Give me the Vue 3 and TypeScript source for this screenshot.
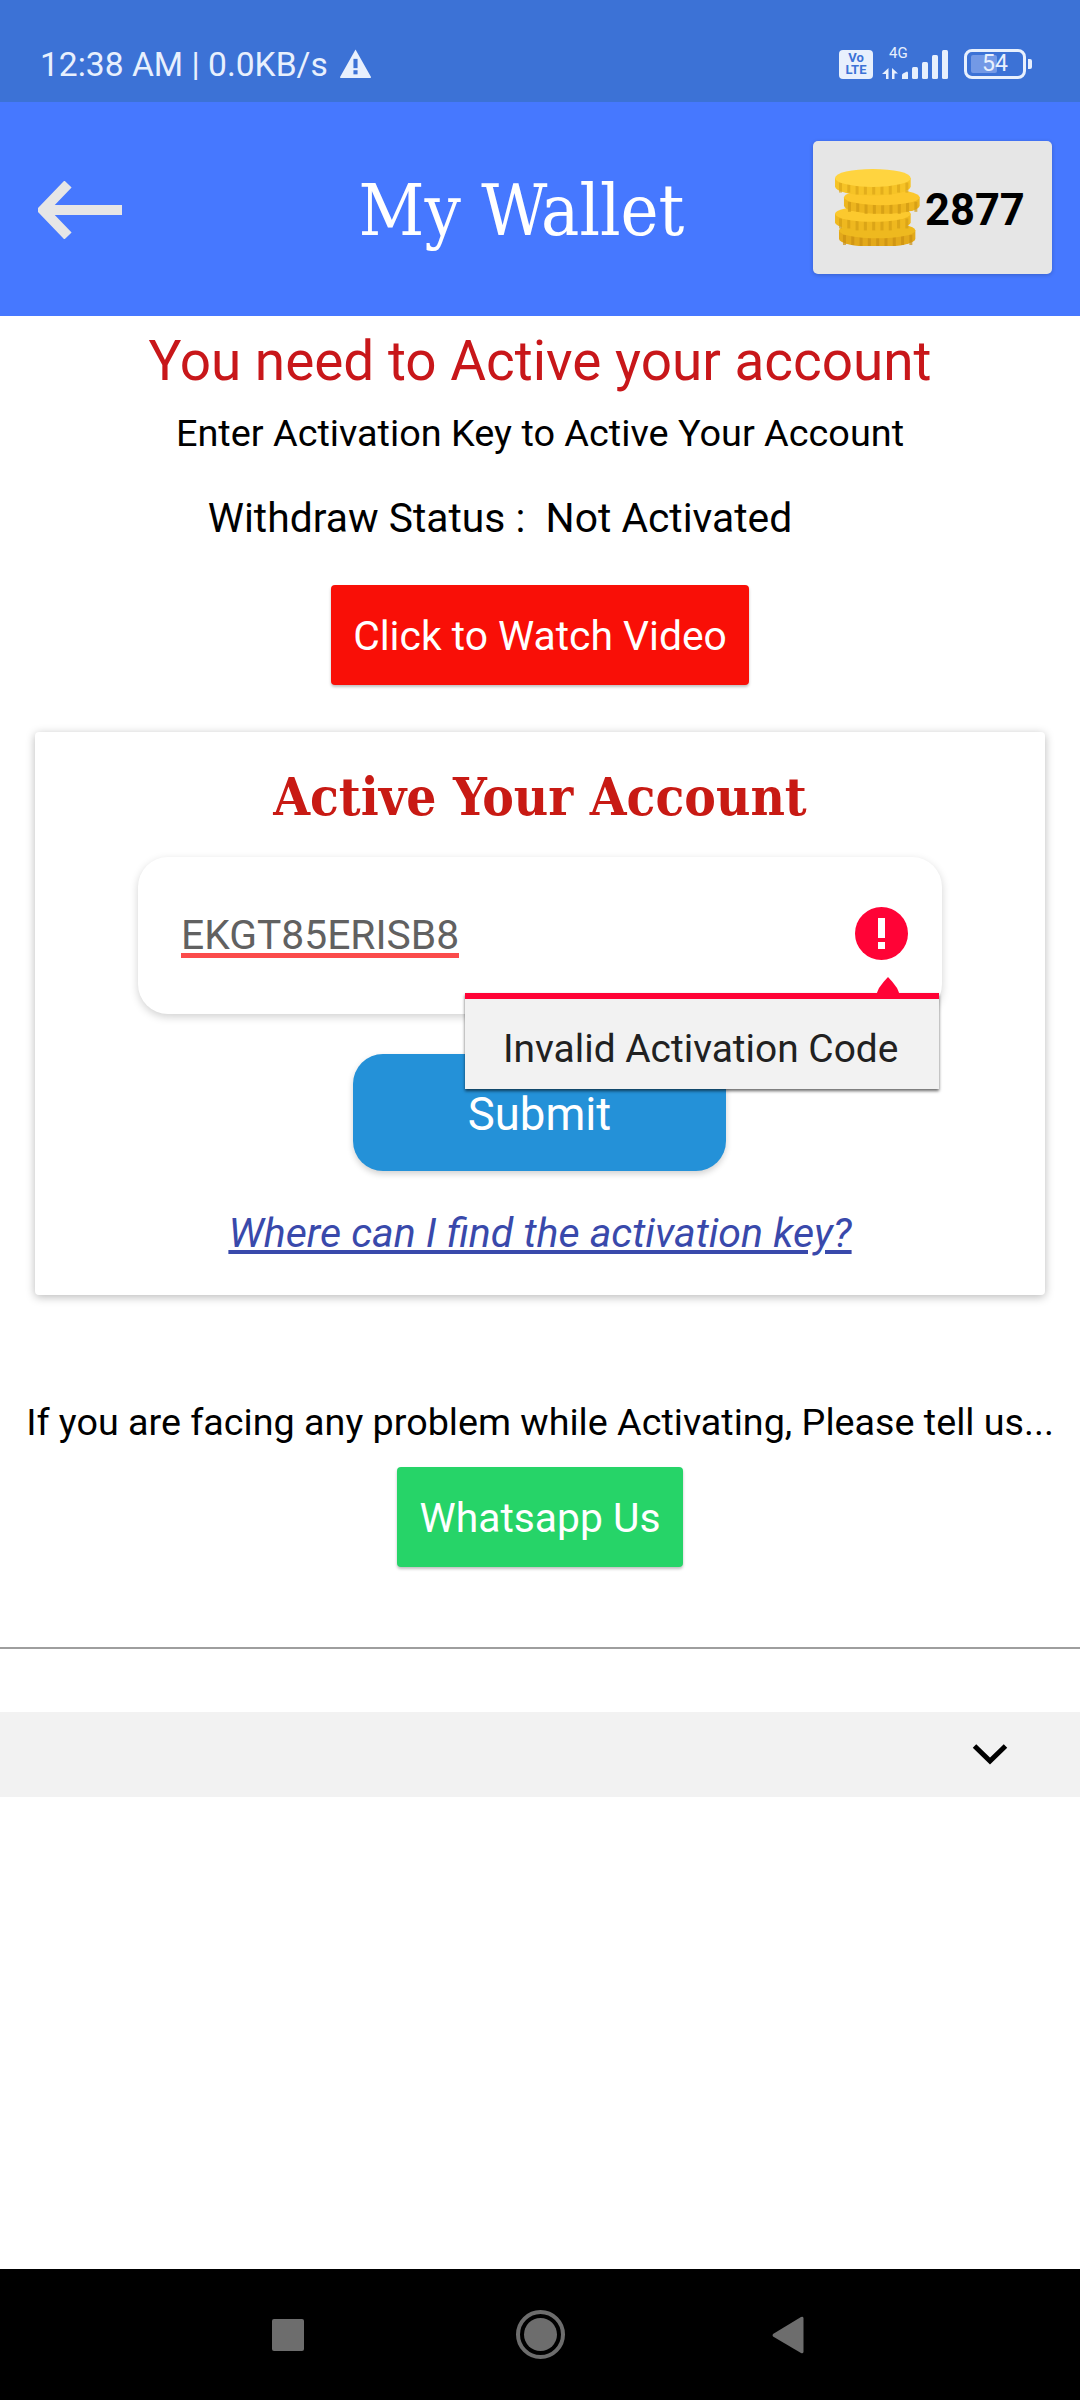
<script setup lang="ts">
const ribs: number[] = Array.from({ length: 9 }, (_, i) => i)
const coins = [
  { cx: 292, top: 635, rx: 115, ry: 24, h: 26, face: '#eeb91f', side: '#e3a91a', rib: '#c98f12' },
  { cx: 279, top: 585, rx: 114, ry: 24, h: 26, face: '#fcc92e', side: '#efb81f', rib: '#d39c14' },
  { cx: 306, top: 535, rx: 114, ry: 24, h: 26, face: '#fcc72c', side: '#edb51e', rib: '#cf9813' },
  { cx: 279, top: 477, rx: 114, ry: 27, h: 26, face: '#ffd43f', side: '#f6c326', rib: '#dba518' },
]
</script>

<template>
  <div class="screen">
    <div class="status">
      <div class="status-left">
        <span>12:38 AM | 0.0KB/s</span>
        <svg class="warn" viewBox="0 0 32 29" width="33" height="31">
          <path d="M16 1 L31 27.5 Q31.5 28.5 30 28.5 H2 Q.5 28.5 1 27.5 Z" fill="#e8f0fd" />
          <rect x="14" y="10" width="4" height="9" fill="#3c72d6" />
          <rect x="14" y="21" width="4" height="4" fill="#3c72d6" />
        </svg>
      </div>
      <div class="status-right">
        <div class="volte"><span>Vo</span><span>LTE</span></div>
        <div class="signal">
          <span class="four-g">4G</span>
          <svg viewBox="0 0 67 32" width="67" height="32">
            <path d="M6.5 21 L0 27 H4 V32 H6.5 Z M10 21 L16 26.5 H12.5 V32 H10 Z" fill="#e8f0fd" />
            <path d="M20 32 V28 Q20 27 21 26.5 L25 24.5 Q26 24.5 26 26 V32 Z" fill="#e8f0fd" />
            <rect x="30" y="20" width="6" height="12" rx="1.5" fill="#e8f0fd" />
            <rect x="40" y="15" width="6" height="17" rx="1.5" fill="#e8f0fd" />
            <rect x="50" y="8" width="6" height="24" rx="1.5" fill="#e8f0fd" />
            <rect x="60" y="3" width="6" height="29" rx="1.5" fill="#e8f0fd" />
          </svg>
        </div>
        <div class="battery">
          <div class="battery-body">
            <div class="battery-fill"></div>
            <span class="battery-num">54</span>
          </div>
          <div class="battery-cap"></div>
        </div>
      </div>
    </div>

    <header class="topbar">
      <svg class="back" viewBox="0 0 84 58" width="84" height="58">
        <path d="M30 3 L5 29 L30 55 M6 29 H84" fill="none" stroke="#e6e6e6" stroke-width="10" />
      </svg>
      <h1 class="title">My Wallet</h1>
      <div class="wallet">
        <svg class="coins" viewBox="165 450 256 232" width="85" height="77">
          <g v-for="(c, i) in coins" :key="i">
            <path
              :d="`M${c.cx - c.rx} ${c.top} v${c.h} a${c.rx} ${c.ry} 0 0 0 ${c.rx * 2} 0 v-${c.h} Z`"
              :fill="c.side"
            />
            <rect
              v-for="r in ribs"
              :key="r"
              :x="c.cx - c.rx + 12 + r * 25"
              :y="c.top + 14"
              width="9"
              :height="c.h + (r > 1 && r < 7 ? 10 : 4)"
              :fill="c.rib"
              opacity="0.7"
            />
            <ellipse :cx="c.cx" :cy="c.top" :rx="c.rx" :ry="c.ry" :fill="c.face" />
          </g>
        </svg>
        <span class="balance">2877</span>
      </div>
    </header>

    <main class="content">
      <h2 class="need">You need to Active your account</h2>
      <p class="enter">Enter Activation Key to Active Your Account</p>
      <p class="withdraw">Withdraw Status :&nbsp; Not Activated</p>
      <button class="btn red-btn">Click to Watch Video</button>

      <section class="card">
        <h3 class="card-title">Active Your Account</h3>
        <div class="field-wrap">
          <div class="field">
            <span class="code">EKGT85ERISB8</span>
            <svg class="err" viewBox="0 0 53 53" width="53" height="53">
              <circle cx="26.5" cy="26.5" r="26.5" fill="#ff0336" />
              <rect x="23" y="11" width="7" height="20" fill="#fff" />
              <rect x="23" y="35" width="7" height="7" fill="#fff" />
            </svg>
          </div>
          <div class="tooltip">
            <svg class="tip" viewBox="0 0 24 18" width="24" height="18">
              <path d="M12 0 Q17 5 21 11 L24 18 H0 L3 11 Q7 5 12 0 Z" fill="#ff0336" />
            </svg>
            Invalid Activation Code
          </div>
        </div>
        <button class="submit">Submit</button>
        <a class="link">Where can I find the activation key?</a>
      </section>

      <p class="facing">If you are facing any problem while Activating, Please tell us...</p>
      <button class="btn green-btn">Whatsapp Us</button>
    </main>

    <hr class="rule" />
    <div class="band">
      <svg viewBox="0 0 36 22" width="36" height="22">
        <path d="M2.5 3 L18 18 L33.5 3" fill="none" stroke="#000" stroke-width="5" />
      </svg>
    </div>
    <div class="spacer"></div>

    <nav class="navbar">
      <div class="nav-square"></div>
      <div class="nav-home"><div class="nav-home-inner"></div></div>
      <svg viewBox="0 0 32 38" width="32" height="38">
        <path d="M31.5 2 V36 Q31 38 29 37 L1 20.5 Q0 19 1 18 L29 1 Q31 0 31.5 2 Z" fill="#6d6d6d" />
      </svg>
    </nav>
  </div>
</template>

<style>
html, body { margin: 0; background: #fff; }
</style>

<style scoped>
.screen {
  width: 1080px;
  height: 2400px;
  display: flex;
  flex-direction: column;
  font-family: Roboto, "Liberation Sans", sans-serif;
  background: #fff;
  overflow: hidden;
}
.status {
  height: 102px;
  flex: none;
  background: #3c72d6;
  color: #e8f0fd;
  display: flex;
  justify-content: space-between;
  align-items: center;
  padding: 26px 48px 0 40px;
  box-sizing: border-box;
}
.status-left {
  display: flex;
  align-items: center;
  gap: 11px;
  font-size: 33.6px;
  line-height: 38px;
  margin-top: 2px;
}
.warn { margin-top: -3px; }
.status-right {
  display: flex;
  align-items: center;
  gap: 9px;
}
.volte {
  width: 34px;
  height: 29px;
  background: #e8f0fd;
  border-radius: 4px;
  color: #3c72d6;
  font-weight: 700;
  font-size: 13px;
  line-height: 12px;
  display: flex;
  flex-direction: column;
  align-items: center;
  justify-content: center;
}
.signal { position: relative; width: 67px; height: 32px; margin-top: -2px; }
.signal svg { display: block; }
.four-g {
  position: absolute;
  left: 7px;
  top: -2px;
  font-size: 15px;
  line-height: 17px;
}
.battery { display: flex; align-items: center; gap: 2px; margin-left: 6px; }
.battery-body {
  position: relative;
  width: 62px;
  height: 30px;
  box-sizing: border-box;
  border: 3px solid #e8f0fd;
  border-radius: 8px;
  display: flex;
  align-items: center;
  justify-content: center;
}
.battery-fill {
  position: absolute;
  left: 4px;
  top: 3px;
  bottom: 3px;
  width: 26px;
  background: #7399e6;
  border-radius: 2px;
}
.battery-num { position: relative; font-size: 23px; line-height: 24px; }
.battery-cap { width: 4px; height: 10px; background: #e8f0fd; border-radius: 0 2px 2px 0; }

.topbar {
  height: 214px;
  flex: none;
  background: #4678ff;
  display: flex;
  align-items: center;
  padding: 0 28px 0 38px;
  box-sizing: border-box;
}
.back { flex: none; margin-top: 2px; }
.title {
  flex: 1;
  margin: 0;
  text-align: center;
  color: #fff;
  font-family: "DejaVu Serif", serif;
  font-stretch: condensed;
  font-weight: 400;
  font-size: 71.5px;
  line-height: 84px;
  padding-left: 108px;
  padding-top: 4px;
  white-space: nowrap;
}
.wallet {
  width: 239px;
  height: 133px;
  flex: none;
  margin-top: -4px;
  background: #e6e6e6;
  border-radius: 5px;
  box-shadow: 0 1px 4px rgba(0, 0, 0, 0.2);
  display: flex;
  align-items: center;
  padding-left: 22px;
  box-sizing: border-box;
}
.coins { flex: none; }
.balance {
  font-weight: 700;
  font-size: 43.5px;
  color: #000;
  margin: 6px 0 0 5px;
}

.content {
  display: flex;
  flex-direction: column;
  align-items: center;
  flex: none;
}
.need {
  margin: 14px 0 0;
  font-weight: 400;
  font-size: 54.9px;
  line-height: 62px;
  color: #c8171a;
}
.enter {
  margin: 19px 0 0;
  font-size: 37.85px;
  line-height: 44px;
  color: #000;
}
.withdraw {
  margin: 39px 80px 0 0;
  font-size: 40.8px;
  line-height: 48px;
  color: #000;
}
.btn {
  border: 0;
  border-radius: 4px;
  color: #fff;
  font-family: inherit;
  font-size: 40.8px;
  height: 100px;
  padding: 2px 0 0;
  box-shadow: 0 2px 3px rgba(0, 0, 0, 0.25);
}
.red-btn {
  width: 418px;
  margin-top: 43px;
  background: #f90f07;
}
.card {
  width: 1010px;
  height: 563px;
  margin-top: 47px;
  background: #fff;
  border-radius: 4px;
  box-shadow: 0 2px 10px rgba(0, 0, 0, 0.28);
  display: flex;
  flex-direction: column;
  align-items: center;
}
.card-title {
  margin: 32px 0 0;
  font-family: "DejaVu Serif", serif;
  font-stretch: condensed;
  font-weight: 700;
  font-size: 52.7px;
  line-height: 65px;
  color: #c81a14;
  white-space: nowrap;
}
.field-wrap { position: relative; margin-top: 28px; }
.field {
  width: 804px;
  height: 157px;
  box-sizing: border-box;
  background: #fff;
  border-radius: 30px;
  box-shadow: 0 3px 8px rgba(0, 0, 0, 0.18);
  display: flex;
  align-items: center;
  justify-content: space-between;
  padding: 0 34px 0 43px;
}
.code {
  font-size: 40.8px;
  line-height: 36px;
  color: #616161;
  border-bottom: 5px solid #fb4b4b;
  margin-top: 4px;
}
.err { margin-top: -4px; }
.tooltip {
  position: absolute;
  z-index: 2;
  left: 327px;
  top: 136px;
  width: 474px;
  height: 96px;
  box-sizing: border-box;
  background: #f2f2f2;
  border-top: 6px solid #ff0336;
  box-shadow: 0 2px 3px rgba(0, 0, 0, 0.6);
  color: #212121;
  font-size: 38.9px;
  line-height: 100px;
  padding-left: 38px;
  white-space: nowrap;
}
.tip { position: absolute; left: 411px; top: -22px; display: block; }
.submit {
  width: 373px;
  height: 117px;
  margin: 40px 1px 0 0;
  border: 0;
  border-radius: 30px;
  background: #2491d8;
  color: #fff;
  font-family: inherit;
  font-size: 45.5px;
  padding: 3px 0 0;
  box-shadow: 0 3px 6px rgba(0, 0, 0, 0.18);
}
.link {
  margin-top: 39px;
  font-size: 41.1px;
  line-height: 46px;
  font-style: italic;
  color: #3949ab;
  text-decoration: underline;
}
.facing {
  margin: 104px 0 0;
  font-size: 37.7px;
  line-height: 46px;
  color: #000;
  white-space: nowrap;
}
.green-btn {
  width: 286px;
  margin-top: 22px;
  background: #26d468;
}
.rule {
  width: 100%;
  height: 2px;
  flex: none;
  margin: 80px 0 0;
  border: 0;
  background: #9e9e9e;
}
.band {
  height: 85px;
  flex: none;
  margin-top: 63px;
  background: #f2f2f2;
  display: flex;
  align-items: center;
  justify-content: flex-end;
  padding-right: 72px;
}
.band svg { margin-top: -1px; }
.spacer { flex: 1; }
.navbar {
  height: 131px;
  flex: none;
  background: #000;
  display: flex;
  align-items: center;
  padding-left: 272px;
  box-sizing: border-box;
  gap: 0;
}
.nav-square {
  width: 32px;
  height: 32px;
  background: #6d6d6d;
  border-radius: 2px;
}
.nav-home {
  width: 49px;
  height: 49px;
  margin: 0 207px 0 212px;
  box-sizing: border-box;
  border: 4px solid #6d6d6d;
  border-radius: 50%;
  display: flex;
  align-items: center;
  justify-content: center;
}
.nav-home-inner {
  width: 33px;
  height: 33px;
  background: #6d6d6d;
  border-radius: 50%;
}
</style>
